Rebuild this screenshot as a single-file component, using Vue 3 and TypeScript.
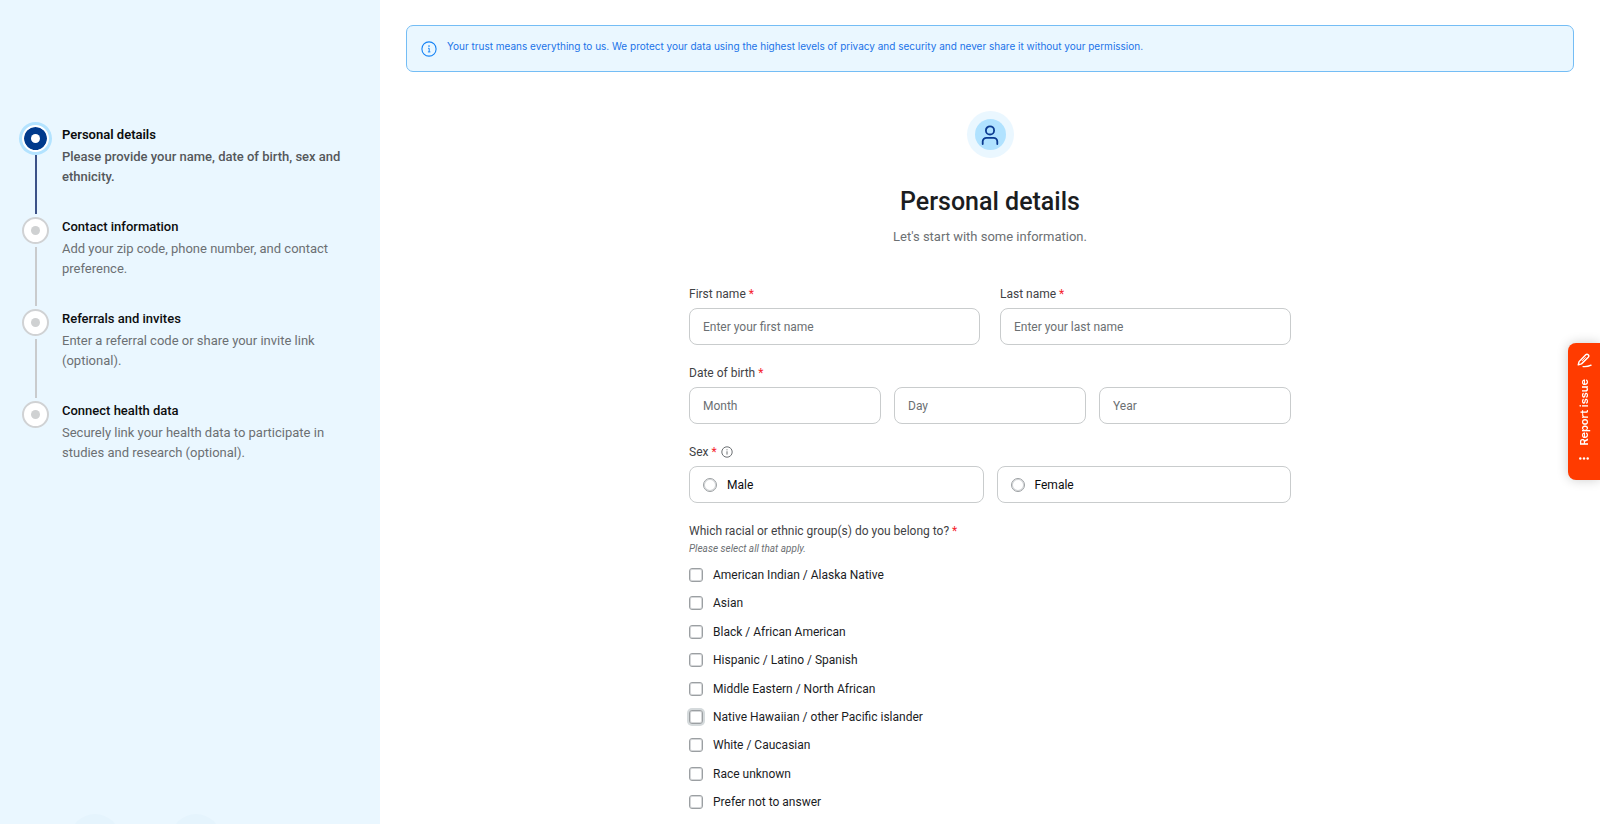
<script setup lang="ts">
import { ref } from 'vue'

interface Step {
  title: string
  text: string
}

const steps: Step[] = [
  { title: 'Personal details', text: 'Please provide your name, date of birth, sex and ethnicity.' },
  { title: 'Contact information', text: 'Add your zip code, phone number, and contact preference.' },
  { title: 'Referrals and invites', text: 'Enter a referral code or share your invite link (optional).' },
  { title: 'Connect health data', text: 'Securely link your health data to participate in studies and research (optional).' },
]
const current = ref<number>(0)

const firstName = ref('')
const lastName = ref('')
const month = ref('')
const day = ref('')
const year = ref('')
const sex = ref('')

const groups: string[] = [
  'American Indian / Alaska Native',
  'Asian',
  'Black / African American',
  'Hispanic / Latino / Spanish',
  'Middle Eastern / North African',
  'Native Hawaiian / other Pacific islander',
  'White / Caucasian',
  'Race unknown',
  'Prefer not to answer',
]
const highlighted = 'Native Hawaiian / other Pacific islander'
const selected = ref<string[]>([])
</script>

<template>
  <div class="page">
    <aside class="sidebar">
      <ol class="steps">
        <li v-for="(step, i) in steps" :key="step.title" class="step" :class="{ active: i === current }">
          <div class="rail">
            <span class="marker"><span class="dot"></span></span>
            <span v-if="i < steps.length - 1" class="line"></span>
          </div>
          <div class="step-body">
            <h2 class="step-title">{{ step.title }}</h2>
            <p class="step-text">{{ step.text }}</p>
          </div>
        </li>
      </ol>
      <div class="bubbles" aria-hidden="true"><span></span><span></span></div>
    </aside>

    <main class="main">
      <div class="banner">
        <svg class="banner-icon" viewBox="0 0 16 16" fill="none" aria-hidden="true">
          <circle cx="8" cy="8" r="7.1" stroke="currentColor" stroke-width="1.1" />
          <path d="M7.1 7.3H8.2V10.8M6.9 10.9H9.4" stroke="currentColor" stroke-width="1" />
          <circle cx="8" cy="5.1" r=".8" fill="currentColor" />
        </svg>
        <p>Your trust means everything to us. We protect your data using the highest levels of privacy and security and never share it without your permission.</p>
      </div>

      <form class="form" @submit.prevent>
        <header class="head">
          <span class="avatar">
            <span class="avatar-inner">
              <svg viewBox="0 0 20 20" fill="none" aria-hidden="true">
                <circle cx="10" cy="5.4" r="4.1" stroke="currentColor" stroke-width="1.8" />
                <path d="M2.7 19V16.6A3.8 3.8 0 0 1 6.5 12.8H13.5A3.8 3.8 0 0 1 17.3 16.6V19" stroke="currentColor" stroke-width="1.8" stroke-linecap="round" />
              </svg>
            </span>
          </span>
          <h1>Personal details</h1>
          <p>Let's start with some information.</p>
        </header>

        <div class="row names">
          <div class="field">
            <label class="label" for="first">First name <i class="req">*</i></label>
            <input id="first" v-model="firstName" class="box" type="text" placeholder="Enter your first name" />
          </div>
          <div class="field">
            <label class="label" for="last">Last name <i class="req">*</i></label>
            <input id="last" v-model="lastName" class="box" type="text" placeholder="Enter your last name" />
          </div>
        </div>

        <fieldset class="field">
          <legend class="label">Date of birth <i class="req">*</i></legend>
          <div class="row">
            <input v-model="month" class="box" type="text" aria-label="Month" placeholder="Month" />
            <input v-model="day" class="box" type="text" aria-label="Day" placeholder="Day" />
            <input v-model="year" class="box" type="text" aria-label="Year" placeholder="Year" />
          </div>
        </fieldset>

        <fieldset class="field">
          <legend class="label">
            Sex <i class="req">*</i>
            <svg class="info" viewBox="0 0 12 12" fill="none" aria-hidden="true">
              <circle cx="6" cy="6" r="5.2" stroke="currentColor" stroke-width="1" />
              <path d="M6 5.3V8.6M6 3.3V4.3" stroke="currentColor" stroke-width="1" />
            </svg>
          </legend>
          <div class="row">
            <label class="box choice"><input v-model="sex" type="radio" name="sex" value="male" />Male</label>
            <label class="box choice"><input v-model="sex" type="radio" name="sex" value="female" />Female</label>
          </div>
        </fieldset>

        <div class="ethnicity" role="group" aria-labelledby="ethnic-q">
          <div id="ethnic-q" class="label">Which racial or ethnic group(s) do you belong to? <i class="req">*</i></div>
          <p class="hint">Please select all that apply.</p>
          <div class="options">
            <label v-for="g in groups" :key="g" class="option">
              <input v-model="selected" type="checkbox" :value="g" :class="{ halo: g === highlighted }" />
              <span>{{ g }}</span>
            </label>
          </div>
        </div>
      </form>
    </main>

    <button class="report" type="button">
      <svg class="pen" viewBox="0 0 16 16" fill="none" aria-hidden="true">
        <path d="M2.2 9.2L9.3 1.9A1.7 1.7 0 0 1 12 4.5L4.8 11.6L1.3 12.6Z" stroke="currentColor" stroke-width="1.5" stroke-linejoin="round" />
        <path d="M5.2 8.5L9.2 4.5" stroke="currentColor" stroke-width="1" />
        <path d="M6.5 14.5C9.5 14.8 12 14.4 15 13" stroke="currentColor" stroke-width="1.5" stroke-linecap="round" />
      </svg>
      <span class="report-text">Report issue</span>
      <svg class="dots" viewBox="0 0 10 3" fill="currentColor" aria-hidden="true">
        <circle cx="1.3" cy="1.5" r="1.2" /><circle cx="5" cy="1.5" r="1.2" /><circle cx="8.7" cy="1.5" r="1.2" />
      </svg>
    </button>
  </div>
</template>

<style>
body {
  margin: 0;
  background: #fff;
}
</style>

<style scoped>
.page {
  display: flex;
  min-height: 100vh;
  font-family: Roboto, "Liberation Sans", sans-serif;
  font-size: 12px;
  line-height: 16px;
  color: #1b1d1f;
}
.page *,
.page *::before {
  box-sizing: border-box;
}
h1, h2, p, ol, fieldset, legend {
  margin: 0;
  padding: 0;
  border: 0;
}
fieldset {
  min-width: 0;
}

.sidebar {
  position: relative;
  flex: none;
  width: 380px;
  padding: 123px 24px 0 20px;
  background: #eaf7ff;
  overflow: hidden;
}
.steps {
  list-style: none;
}
.step {
  display: flex;
  gap: 11px;
  min-height: 92px;
}
.rail {
  display: flex;
  flex-direction: column;
  align-items: center;
  flex: none;
  width: 31px;
  padding-top: 2px;
}
.marker {
  display: flex;
  align-items: center;
  justify-content: center;
  flex: none;
  width: 27px;
  height: 27px;
  border: 2px solid #d0d2d4;
  border-radius: 50%;
  background: #fff;
}
.dot {
  width: 9px;
  height: 9px;
  border-radius: 50%;
  background: #cfd1d2;
}
.line {
  flex: 1;
  width: 2px;
  margin: 3px 0 1px;
  background: #c9cbcd;
}
.active .marker {
  border-color: #fff;
  background: #003a8c;
  background-clip: padding-box;
  box-shadow: 0 0 0 3px #b3e3ff;
}
.active .dot {
  background: #fff;
}
.active .line {
  background: #3c5288;
}
.step-body {
  padding-top: 2px;
}
.step-title {
  font-size: 13px;
  font-weight: 500;
  line-height: 20px;
  color: #0c0d0e;
}
.step-text {
  margin-top: 2px;
  font-size: 13px;
  line-height: 20px;
  color: #6c7073;
}
.active .step-title {
  font-weight: 600;
}
.active .step-text {
  font-weight: 500;
  color: #55585b;
}
.bubbles {
  position: absolute;
  bottom: -40px;
  left: 70px;
  display: flex;
  gap: 51px;
}
.bubbles span {
  width: 50px;
  height: 50px;
  border-radius: 50%;
  background: #e5f4fd;
}

.main {
  flex: 1;
  min-width: 0;
  display: flex;
  flex-direction: column;
  align-items: center;
  padding: 25px 26px 14px;
}
.banner {
  display: flex;
  gap: 10px;
  align-self: stretch;
  min-height: 47px;
  padding: 13px 14px;
  border: 1px solid #74bdf5;
  border-radius: 7px;
  background: #eaf7ff;
  color: #1a73e8;
}
.banner-icon {
  flex: none;
  width: 16px;
  height: 16px;
  margin-top: 2px;
  color: #1683f5;
}
.banner p {
  font-family: Inter, Roboto, sans-serif;
  font-size: 10px;
  line-height: 14px;
}

.form {
  flex: 1;
  display: flex;
  flex-direction: column;
  gap: 20px;
  width: 100%;
  max-width: 602px;
}
.head {
  display: flex;
  flex-direction: column;
  align-items: center;
  padding: 39px 0 19px;
}
.avatar,
.avatar-inner {
  display: flex;
  align-items: center;
  justify-content: center;
  border-radius: 50%;
}
.avatar {
  width: 47px;
  height: 47px;
  background: #eaf7ff;
}
.avatar-inner {
  width: 31px;
  height: 31px;
  background: #b0e2ff;
  color: #0b3b91;
}
.avatar svg {
  width: 20px;
  height: 20px;
}
.head h1 {
  margin-top: 28px;
  font-size: 25px;
  font-weight: 500;
  line-height: 32px;
}
.head p {
  margin-top: 9px;
  font-size: 13px;
  line-height: 20px;
  color: #6c7073;
}
.row {
  display: flex;
  gap: 13px;
}
.names {
  gap: 20px;
}
.names .field {
  flex: 1;
  min-width: 0;
}
.label {
  display: block;
  margin-bottom: 6px;
  font-size: 12px;
  line-height: 16px;
  color: #3f4245;
}
.req {
  font-style: normal;
  color: #f5222d;
}
.info {
  width: 12px;
  height: 12px;
  margin-left: 4px;
  vertical-align: -2px;
  color: #6c7073;
}
.box {
  display: block;
  flex: 1;
  width: 100%;
  min-width: 0;
  height: 37px;
  padding: 0 13px;
  border: 1px solid #c9cccd;
  border-radius: 8px;
  background: #fff;
  font: inherit;
  color: #1b1d1f;
}
.box::placeholder {
  color: #6c7073;
  opacity: 1;
}
.choice {
  display: flex;
  align-items: center;
  gap: 10px;
  color: #0c0d0e;
}
input[type='radio'],
input[type='checkbox'] {
  appearance: none;
  flex: none;
  width: 14px;
  height: 14px;
  margin: 0;
  border: 1px solid #9b9fa2;
  border-radius: 3px;
  background: #fff;
  box-shadow: inset 0 0 0 1px #d5d7d9;
}
input[type='radio'] {
  border-radius: 50%;
}
input:checked {
  border-color: #003a8c;
  background: #003a8c;
}
input.halo {
  box-shadow: inset 0 0 0 1px #d5d7d9, 0 0 0 2px #d5dadc;
}
.ethnicity {
  flex: 1;
  display: flex;
  flex-direction: column;
}
.ethnicity .label {
  margin-bottom: 3px;
}
.hint {
  font-size: 10px;
  font-style: italic;
  line-height: 14px;
  color: #6c7073;
}
.options {
  flex: 1;
  display: flex;
  flex-direction: column;
  justify-content: space-between;
  gap: 12px;
  padding-top: 11px;
}
.option {
  display: flex;
  align-items: center;
  gap: 10px;
  align-self: flex-start;
}

.report {
  position: fixed;
  top: 343px;
  right: 0;
  display: flex;
  flex-direction: column;
  align-items: center;
  gap: 11px;
  width: 32px;
  padding: 10px 0 20px;
  border: 0;
  border-radius: 8px 0 0 8px;
  background: #ff3b00;
  color: #fff;
  box-shadow: 0 0 12px rgba(0, 0, 0, 0.2);
  font-family: Inter, Roboto, sans-serif;
  font-size: 11px;
  font-weight: 600;
  line-height: 14px;
}
.pen {
  width: 15px;
  height: 15px;
}
.report-text {
  writing-mode: vertical-rl;
  transform: rotate(180deg);
}
.dots {
  width: 10px;
  height: 3px;
}
</style>
